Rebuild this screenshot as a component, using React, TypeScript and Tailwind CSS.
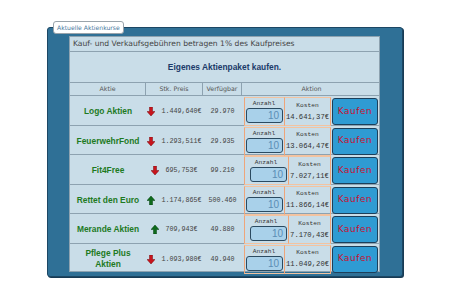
import React from "react";

type Stock = {
  name: string;
  up: boolean;
  price: string;
  avail: string;
  cost: string;
  wide: boolean;
};

const stocks: Stock[] = [
  { name: "Logo Aktien", up: false, price: "1.449,640€", avail: "29.970", cost: "14.641,37€", wide: true },
  { name: "FeuerwehrFond", up: false, price: "1.293,511€", avail: "29.935", cost: "13.064,47€", wide: true },
  { name: "Fit4Free", up: false, price: "695,753€", avail: "99.210", cost: "7.027,11€", wide: false },
  { name: "Rettet den Euro", up: true, price: "1.174,865€", avail: "500.460", cost: "11.866,14€", wide: true },
  { name: "Merande Aktien", up: true, price: "709,943€", avail: "49.880", cost: "7.170,43€", wide: false },
  { name: "Pflege Plus Aktien", up: false, price: "1.093,980€", avail: "49.940", cost: "11.049,20€", wide: true },
];

function Arrow({ up }: { up: boolean }) {
  return (
    <svg width="8" height="9" viewBox="0 0 8 9" className="shrink-0">
      {up ? (
        <path d="M4 0 L8 4.5 H5.5 V9 H2.5 V4.5 H0 Z" fill="#0e6b1c" stroke="#06400f" strokeWidth="0.5" />
      ) : (
        <path d="M2.5 0 H5.5 V4.5 H8 L4 9 L0 4.5 H2.5 Z" fill="#c8141c" stroke="#7a0a0e" strokeWidth="0.5" />
      )}
    </svg>
  );
}

const sans = "font-['DejaVu_Sans',Verdana,sans-serif]";
const arial = "font-['Liberation_Sans',Arial,sans-serif]";
const mono = "font-['Liberation_Mono','Courier_New',monospace]";
const line = "border-[#8da2b0]";

function StockRow({ s }: { s: Stock }) {
  return (
    <div className={`grid grid-cols-[76px_57px_39px_139px] h-[29.5px] border-b ${line} last:border-b-0`}>
      <div className={`flex items-center justify-center text-center px-[3px] ${arial} text-[8.4px] leading-[11px] font-bold text-[#1d7a1f]`}>
        {s.name}
      </div>
      <div className={`flex items-center justify-center gap-[6px] ${mono} text-[6.7px] text-[#444]`}>
        <Arrow up={s.up} />
        <span>{s.price}</span>
      </div>
      <div className={`flex items-center justify-center ${mono} text-[6.7px] text-[#444]`}>
        {s.avail}
      </div>
      <div className="flex items-stretch py-[1px] pl-[2px] pr-[3px]">
        <div
          className={`flex flex-col items-end justify-between border border-[#f3c3a0] border-x-[#eea57a] pt-[2px] pb-[2px] pr-[1px] ${
            s.wide ? "w-[41px]" : "w-[45px]"
          }`}
        >
          <span className={`self-center ${mono} text-[6.2px] leading-[8px] text-[#333]`}>Anzahl</span>
          <div className={`w-[37px] h-[15px] rounded-[3px] border border-[#2b4a60] bg-[#a9d1ea] flex items-center justify-end pr-[3px] ${arial} text-[10px] text-[#5b8db5]`}>
            10
          </div>
        </div>
        <div
          className={`flex flex-col items-center justify-center gap-[3px] border border-l-0 border-[#f3c3a0] border-r-[#eea57a] ${
            s.wide ? "w-[46px]" : "w-[42px]"
          }`}
        >
          <span className={`${mono} text-[6.2px] leading-[8px] text-[#333]`}>Kosten</span>
          <span className={`${mono} text-[7.2px] leading-[9px] text-[#333]`}>{s.cost}</span>
        </div>
        <button
          className={`ml-[1px] my-[1px] w-[46px] rounded-[3px] border border-[#1d3f5a] bg-[#2f9bd3] ${sans} text-[8.8px] tracking-[0.6px] text-[#c8102e]`}
        >
          Kaufen
        </button>
      </div>
    </div>
  );
}

export default function App() {
  return (
    <div className="w-[450px] h-[302px] bg-white pt-[27px] pl-[47px]">
      <div className="relative w-[356px] h-[250px] bg-[#2f7096] border border-[#1c4764] rounded-[3px] shadow-[1px_1px_0_#183b54] pt-[8px] pl-[21px]">
        <div className={`absolute left-[5px] top-[-7px] h-[13px] px-[3px] flex items-center bg-white border border-[#9aa4ab] rounded-[3px] ${sans} text-[6.1px] text-[#4a7aa0]`}>
          Aktuelle Aktienkurse
        </div>
        <div className={`w-[311px] h-[236px] bg-[#c9dde8] border ${line} flex flex-col`}>
          <div className={`h-[15px] shrink-0 flex items-center pl-[3px] border-b ${line} ${sans} text-[7.6px] text-[#444]`}>
            Kauf- und Verkaufsgebühren betragen 1% des Kaufpreises
          </div>
          <div className={`h-[31px] shrink-0 flex items-center justify-center border-b ${line} ${arial} text-[8.4px] font-bold text-[#1b3a68]`}>
            Eigenes Aktienpaket kaufen.
          </div>
          <div className={`h-[13px] shrink-0 grid grid-cols-[76px_57px_39px_139px] border-b ${line} ${sans} text-[6.3px] text-[#555]`}>
            <div className={`flex items-center justify-center border-r ${line}`}>Aktie</div>
            <div className={`flex items-center justify-center border-r ${line}`}>Stk. Preis</div>
            <div className={`flex items-center justify-center border-r ${line}`}>Verfügbar</div>
            <div className="flex items-center justify-center">Aktion</div>
          </div>
          {stocks.map((s) => (
            <StockRow key={s.name} s={s} />
          ))}
        </div>
      </div>
    </div>
  );
}
